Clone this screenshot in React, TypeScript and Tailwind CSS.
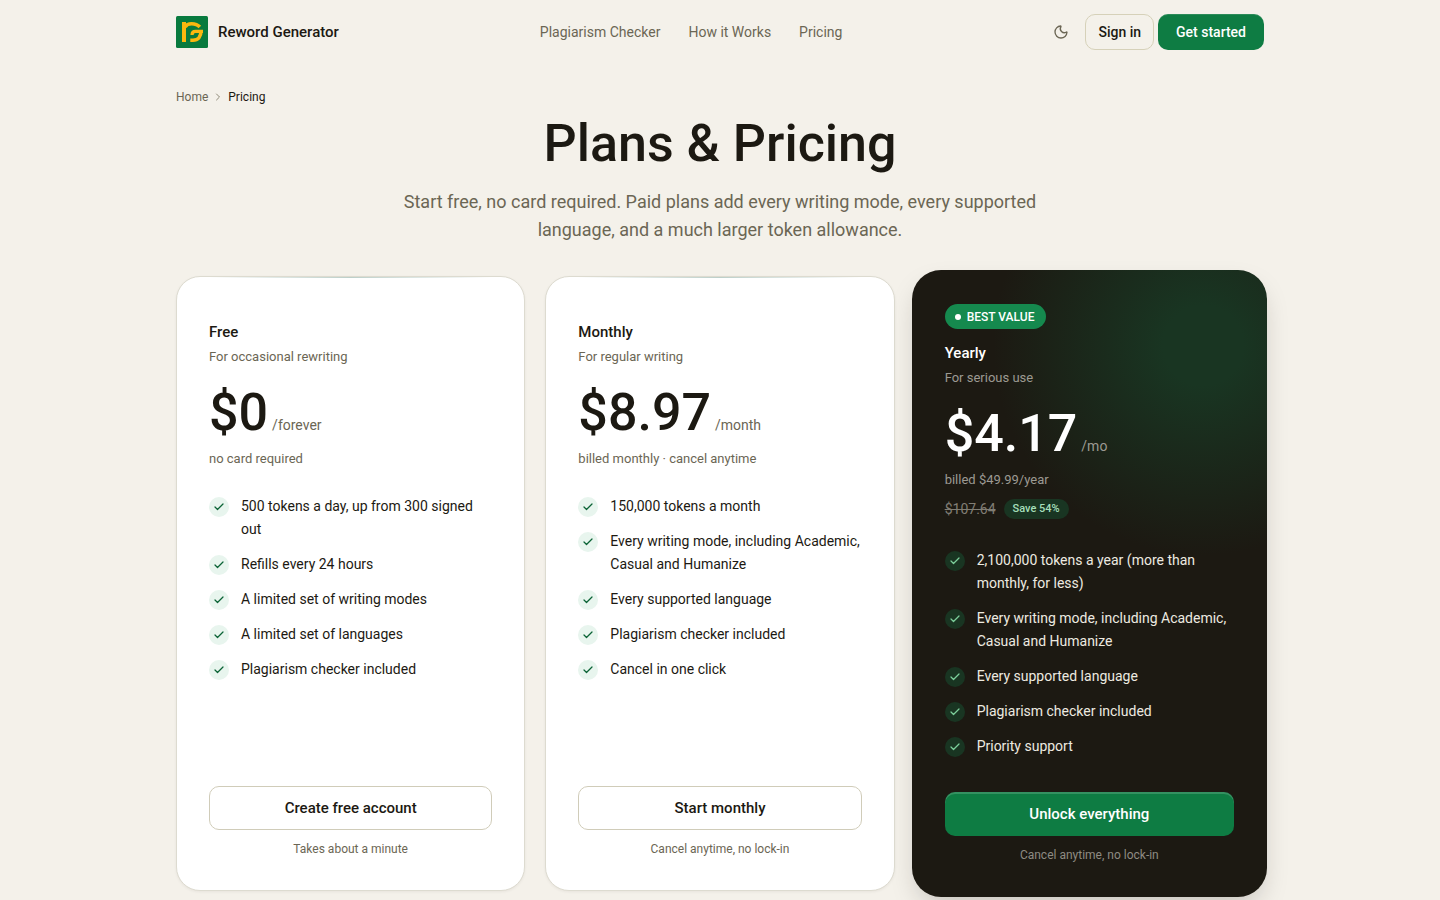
import { Check, ChevronRight, Moon } from 'lucide-react';
import clsx from 'clsx';

type Plan = {
  name: string;
  blurb: string;
  price: string;
  period: string;
  billing: string;
  was?: string;
  save?: string;
  badge?: string;
  features: string[];
  cta: string;
  note: string;
  featured?: boolean;
};

const navLinks = ["Plagiarism Checker", "How it Works", "Pricing"];

const plans: Plan[] = [
  {
    name: "Free",
    blurb: "For occasional rewriting",
    price: "$0",
    period: "/forever",
    billing: "no card required",
    features: [
      "500 tokens a day, up from 300 signed out",
      "Refills every 24 hours",
      "A limited set of writing modes",
      "A limited set of languages",
      "Plagiarism checker included",
    ],
    cta: "Create free account",
    note: "Takes about a minute",
  },
  {
    name: "Monthly",
    blurb: "For regular writing",
    price: "$8.97",
    period: "/month",
    billing: "billed monthly · cancel anytime",
    features: [
      "150,000 tokens a month",
      "Every writing mode, including Academic, Casual and Humanize",
      "Every supported language",
      "Plagiarism checker included",
      "Cancel in one click",
    ],
    cta: "Start monthly",
    note: "Cancel anytime, no lock-in",
  },
  {
    name: "Yearly",
    blurb: "For serious use",
    price: "$4.17",
    period: "/mo",
    billing: "billed $49.99/year",
    was: "$107.64",
    save: "Save 54%",
    badge: "BEST VALUE",
    features: [
      "2,100,000 tokens a year (more than monthly, for less)",
      "Every writing mode, including Academic, Casual and Humanize",
      "Every supported language",
      "Plagiarism checker included",
      "Priority support",
    ],
    cta: "Unlock everything",
    note: "Cancel anytime, no lock-in",
    featured: true,
  },
];

function Logo() {
  return (
    <svg viewBox="0 0 32 32" className="size-8" aria-hidden="true">
      <rect width="32" height="32" rx="1.5" fill="#087a3e" />
      <g fill="none" stroke="#fbb80f">
        <path d="M8 26V6" strokeWidth="4" />
        <path d="M9 11C10.500 8.600 12.500 7.700 15.500 7.700c3.600 0 6.300 1 8.300 3.300" strokeWidth="3.6" />
        <path d="M27 15.400H19.500c-2.300 0-3.500 1.200-3.500 3.600" strokeWidth="3.2" />
        <path d="M25 15c0 5.800-3 9.200-8 9.200H14.300" strokeWidth="3.600" />
      </g>
    </svg>
  );
}

function Header() {
  return (
    <header className="mx-auto flex h-16 max-w-[1088px] items-center justify-between">
      <a href="#" className="flex items-center gap-[10px] text-[15px] font-medium">
        <Logo />
        Reword Generator
      </a>
      <nav className="flex gap-7 text-sm text-[#6b6654]">
        {navLinks.map((l) => <a key={l} href="#">{l}</a>)}
      </nav>
      <div className="flex items-center gap-1 text-sm font-medium">
        <button type="button" aria-label="Toggle theme" className="mr-[2px] flex size-9 items-center justify-center text-[#6b6654]">
          <Moon size={16} />
        </button>
        <button type="button" className="h-9 rounded-[10px] border border-[#d6d1b9] px-3">Sign in</button>
        <button type="button" className="h-9 rounded-[10px] bg-[#0e7c43] px-[18px] text-white shadow-[inset_0_1px_0_rgba(255,255,255,0.12)]">Get started</button>
      </div>
    </header>
  );
}

function PlanCard({ plan }: { plan: Plan }) {
  const dark = plan.featured;
  return (
    <article
      className={clsx(
        "relative flex flex-col overflow-hidden",
        dark
          ? "-mx-[3px] -my-[6px] rounded-[29px] bg-[#1c1912] bg-[radial-gradient(circle_at_82%_12%,#193522_0,#193522_40px,#1c1912_210px)] px-[33px] pt-[34px] pb-[33px] text-white shadow-[0_12px_28px_-8px_rgba(28,25,18,0.25)]"
          : "rounded-[24px] border border-[#dddbd0] bg-white px-8 pt-[43px] pb-8 shadow-[0_1px_3px_rgba(28,25,18,0.06)]"
      )}
    >
      {!dark && <div className="absolute inset-x-8 top-0 h-px bg-linear-to-r from-transparent via-[#bccfc9] to-transparent" />}
      {plan.badge && (
        <span className="mb-3 flex h-[25px] items-center gap-[6px] self-start rounded-full bg-[#15894e] pr-3 pl-[10px] text-xs font-medium">
          <span className="size-[6px] rounded-full bg-white" />
          {plan.badge}
        </span>
      )}
      <h2 className="text-[15px] leading-6 font-medium">{plan.name}</h2>
      <p className={clsx("mt-[3px] text-[13px] leading-5", dark ? "text-[#9c9a92]" : "text-[#6b6654]")}>{plan.blurb}</p>
      <p className="mt-[18px] flex items-baseline gap-1">
        <span className="text-[52px] leading-14 font-medium">{plan.price}</span>
        <span className={clsx("text-sm", dark ? "text-[#9c9a92]" : "text-[#6b6654]")}>{plan.period}</span>
      </p>
      <p className={clsx("mt-2 text-[13px] leading-5", dark ? "text-[#9c9a92]" : "text-[#6b6654]")}>{plan.billing}</p>
      {plan.was && (
        <p className="mt-[9px] flex items-center gap-2 leading-5">
          <s className="text-sm text-[#807d74]">{plan.was}</s>
          <span className="rounded-full bg-[#193522] px-[9px] text-[11px] leading-5 font-medium text-[#a5dfba]">{plan.save}</span>
        </p>
      )}
      <ul className={clsx("flex flex-col gap-3 text-sm leading-[23px]", dark ? "mt-[30px] mb-[34px] text-[#edeae0]" : "mt-[26px] mb-7")}>
        {plan.features.map((f) => (
          <li key={f} className="flex gap-3">
            <span
              className={clsx(
                "mt-[2px] flex size-5 shrink-0 items-center justify-center rounded-full",
                dark ? "bg-[#193522] text-[#7ccf9b]" : "bg-[#e8f5ee] text-[#0a6335]"
              )}
            >
              <Check size={12} strokeWidth={2.5} />
            </span>
            {f}
          </li>
        ))}
      </ul>
      <button
        type="button"
        className={clsx(
          "mt-auto h-11 shrink-0 rounded-[10px] text-[15px] font-medium",
          dark ? "bg-[#0e7c43] shadow-[inset_0_2px_0_rgba(255,255,255,0.16)]" : "border border-[#d0ccb9]"
        )}
      >
        {plan.cta}
      </button>
      <p className={clsx("mt-[10px] text-center text-xs leading-[18px]", dark ? "text-[#8e8b82]" : "text-[#6b6654]")}>{plan.note}</p>
    </article>
  );
}

export default function App() {
  return (
    <div className="min-h-screen bg-[#f4f1ea] px-6 pb-[2px] font-['Roboto',sans-serif] text-[#1c1912]">
      <Header />
      <main className="mx-auto max-w-[1088px]">
        <nav aria-label="Breadcrumb" className="flex items-center gap-1 pt-6 text-xs leading-[18px]">
          <a href="#" className="text-[#6b6654]">Home</a>
          <ChevronRight size={12} className="text-[#8f8a78]" />
          <span aria-current="page">Pricing</span>
        </nav>
        <h1 className="mt-[10px] text-center text-[52px] leading-14 font-medium">Plans &amp; Pricing</h1>
        <p className="mx-auto mt-4 max-w-[672px] text-center text-lg leading-7 text-[#6b6654]">
          Start free, no card required. Paid plans add every writing mode, every supported language, and a much larger token allowance.
        </p>
        <section className="mt-8 grid grid-cols-1 gap-5 lg:grid-cols-3">
          {plans.map((p) => <PlanCard key={p.name} plan={p} />)}
        </section>
      </main>
    </div>
  );
}
